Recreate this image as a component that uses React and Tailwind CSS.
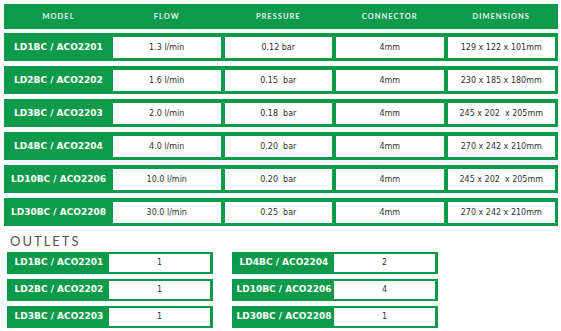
const specs = [
  { model: 'LD1BC / ACO2201', flow: '1.3 l/min', pressure: '0.12 bar', connector: '4mm', dims: '129 x 122 x 101mm' },
  { model: 'LD2BC / ACO2202', flow: '1.6 l/min', pressure: '0.15  bar', connector: '4mm', dims: '230 x 185 x 180mm' },
  { model: 'LD3BC / ACO2203', flow: '2.0 l/min', pressure: '0.18  bar', connector: '4mm', dims: '245 x 202  x 205mm' },
  { model: 'LD4BC / ACO2204', flow: '4.0 l/min', pressure: '0.20  bar', connector: '4mm', dims: '270 x 242 x 210mm' },
  { model: 'LD10BC / ACO2206', flow: '10.0 l/min', pressure: '0.20  bar', connector: '4mm', dims: '245 x 202  x 205mm' },
  { model: 'LD30BC / ACO2208', flow: '30.0 l/min', pressure: '0.25  bar', connector: '4mm', dims: '270 x 242 x 210mm' },
];

const outletsLeft = [
  { model: 'LD1BC / ACO2201', count: 1 },
  { model: 'LD2BC / ACO2202', count: 1 },
  { model: 'LD3BC / ACO2203', count: 1 },
];

const outletsRight = [
  { model: 'LD4BC / ACO2204', count: 2 },
  { model: 'LD10BC / ACO2206', count: 4 },
  { model: 'LD30BC / ACO2208', count: 1 },
];

const headers = ['FLOW', 'PRESSURE', 'CONNECTOR', 'DIMENSIONS'];

const Cell = ({ children }) => (
  <div className="flex-1 bg-white flex items-center justify-center text-[8px] text-[#333] whitespace-pre font-['DejaVu_Sans',sans-serif]">
    {children}
  </div>
);

const OutletRow = ({ model, count }) => (
  <div className="flex h-[22px] w-[206px] bg-[#0e9a4b] p-[2px] pr-[3px]">
    <div className="w-[100px] flex items-center justify-center text-white font-bold text-[9px] font-['DejaVu_Sans',sans-serif] whitespace-nowrap">
      {model}
    </div>
    <div className="flex-1 bg-white flex items-center justify-center text-[8px] text-[#333] font-['DejaVu_Sans',sans-serif]">
      {count}
    </div>
  </div>
);

export default function App() {
  return (
    <div className="w-[561px] h-[331px] bg-white overflow-hidden pt-[4px]">
      <div className="ml-[4px] w-[554px]">
        {/* header */}
        <div className="flex h-[25px] bg-[#0e9a4b] pr-[3px] text-[#e4f4ea] font-bold text-[7.5px] tracking-[1px] font-['Lato',sans-serif]">
          <div className="w-[109px] flex items-center justify-center">MODEL</div>
          <div className="flex-1 flex gap-[4px]">
            {headers.map((h) => (
              <div key={h} className="flex-1 flex items-center justify-center">{h}</div>
            ))}
          </div>
        </div>

        {/* rows */}
        <div className="flex flex-col gap-[5px] mt-[4px]">
          {specs.map((s) => (
            <div key={s.model} className="flex h-[28px] bg-[#0e9a4b] pt-[4px] pb-[3px] pr-[3px]">
              <div className="w-[109px] flex items-center justify-center text-white font-bold text-[9px] font-['DejaVu_Sans',sans-serif] whitespace-nowrap">
                {s.model}
              </div>
              <div className="flex-1 flex gap-[4px]">
                <Cell>{s.flow}</Cell>
                <Cell>{s.pressure}</Cell>
                <Cell>{s.connector}</Cell>
                <Cell>{s.dims}</Cell>
              </div>
            </div>
          ))}
        </div>
      </div>

      {/* outlets */}
      <div className="ml-[10px] mt-[8px] text-[13px] leading-[15px] tracking-[2px] text-[#555] font-['Lato',sans-serif]">
        OUTLETS
      </div>
      <div className="flex gap-[19px] ml-[7px] mt-[3px]">
        <div className="flex flex-col gap-[5px]">
          {outletsLeft.map((o) => (
            <OutletRow key={o.model} {...o} />
          ))}
        </div>
        <div className="flex flex-col gap-[5px]">
          {outletsRight.map((o) => (
            <OutletRow key={o.model} {...o} />
          ))}
        </div>
      </div>
    </div>
  );
}
